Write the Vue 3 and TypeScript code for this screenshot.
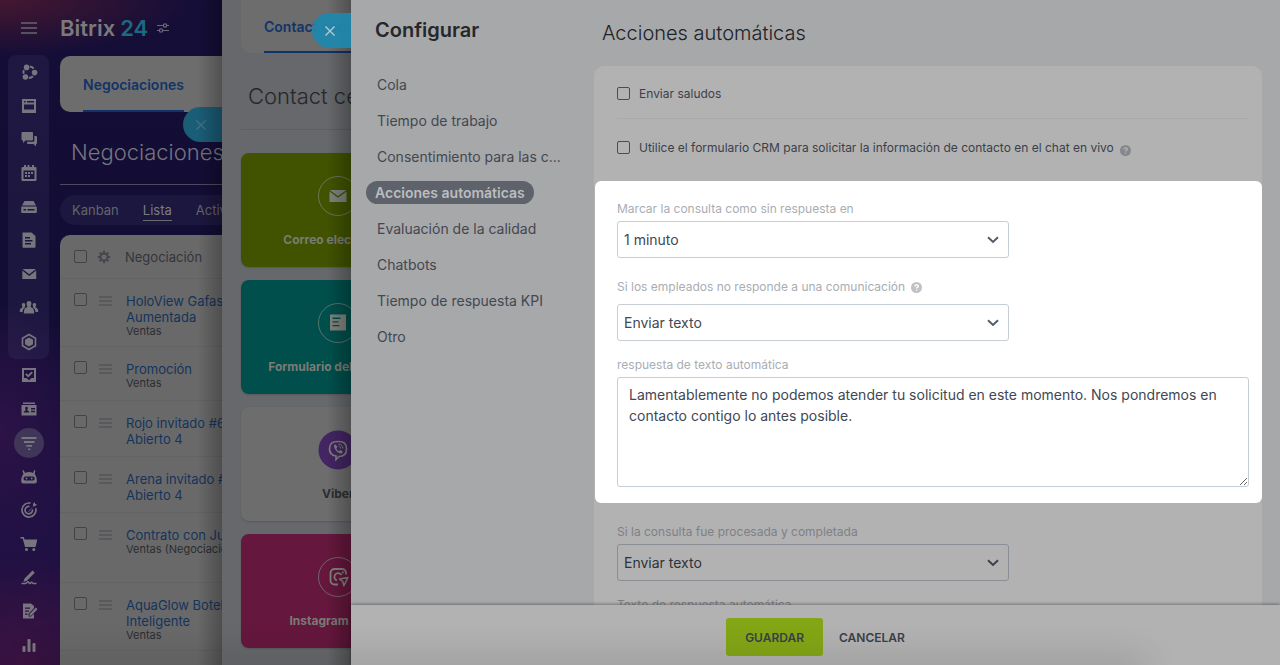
<script setup lang="ts">
import { ref } from 'vue'

interface RailIcon {
  name: string
  art: string
  active?: boolean
}

const railTop: RailIcon[] = [
  { name: 'Colaboración', art: '<path d="M11 4.600a6 6 0 0 1 3.600 2M4.800 8.200a6 6 0 0 0-.1 3.600M9.800 16a6 6 0 0 0 4.200-1.800" fill="none" stroke="currentColor" stroke-width="2"/><circle cx="7.600" cy="5.400" r="2.800"/><circle cx="15.600" cy="10.600" r="2.800"/><circle cx="6.400" cy="15" r="2.800"/>' },
  { name: 'Noticias', art: '<path fill-rule="evenodd" d="M3 3h14v14H3zM5 5v1.600h1.500V5zm3 0v1.600h7V5zM5 8.500v5h10v-5z"/>' },
  { name: 'Chat', art: '<path d="M3.500 3h9.500a1 1 0 0 1 1 1v6.500a1 1 0 0 1-1 1H6.500L4 14v-2.500h-.5a1 1 0 0 1-1-1V4a1 1 0 0 1 1-1z"/><path d="M15.300 7H17a1 1 0 0 1 1 1v6a1 1 0 0 1-1 1v2.500L14.500 15H9a1 1 0 0 1-1-1v-1.200h6.300a1 1 0 0 0 1-1z"/>' },
  { name: 'Calendario', art: '<path fill-rule="evenodd" d="M3.500 4H5V2h2v2h1.500V2h2v2H13V2h2v2h1.500a1 1 0 0 1 1 1v12a1 1 0 0 1-1 1h-13a1 1 0 0 1-1-1V5a1 1 0 0 1 1-1zM4.500 7.500V16h11V7.500z"/><path d="M6 9h2v2H6zm3 0h2v2H9zm3 0h2v2h-2zm-6 3h2v2H6zm3 0h2v2H9z"/>' },
  { name: 'Drive', art: '<path d="M5.500 4h9l2.500 4.500H3z"/><path fill-rule="evenodd" d="M3 9.500h14a.8.8 0 0 1 .8.8v4.900a.8.8 0 0 1-.8.8H3a.8.8 0 0 1-.8-.8v-4.900a.8.8 0 0 1 .8-.8zm1.500 2.400v1.600H7v-1.600zm4 0v1.600h7v-1.600z"/>' },
  { name: 'Documentos', art: '<path fill-rule="evenodd" d="M3.500 2.500h9L16.500 6v11a.8.8 0 0 1-.8.800H4.300a.8.8 0 0 1-.8-.8zM6 7v1.400h5V7zm0 3v1.400h7.500V10zm0 3v1.400h6V13z"/>' },
  { name: 'Correo', art: '<path d="M3.500 5h13.500l-6.800 5.200z"/><path d="M3.300 6.600l6.900 5.400 7-5.400V15H3.300z"/>' },
  { name: 'Grupos', art: '<path d="M10 3c1.700 0 2.600 1.200 2.400 2.900-.1 1.300-.8 1.900-.8 2.700 0 1 2.700 1.200 3.200 3.400l.4 3.500H4.800l.4-3.500c.5-2.200 3.200-2.400 3.200-3.400 0-.8-.7-1.400-.8-2.700C7.400 4.200 8.300 3 10 3z"/><path d="M4.500 5c1.300 0 1.900.9 1.800 2.200-.1 1-.5 1.300-.5 1.900 0 .5.200.7-.8 1.400-1 .8-1.200 1.500-1.400 3.500H.8c0-3 .3-3.400 2.300-4.300.4-.2.200-1.800-.2-2.700C2.600 5.900 3.200 5 4.500 5zM15.500 5c-1.300 0-1.900.9-1.800 2.200.1 1 .5 1.300.5 1.900 0 .5-.2.700.8 1.400 1 .8 1.200 1.500 1.400 3.500h2.800c0-3-.3-3.400-2.300-4.300-.4-.2-.2-1.800.2-2.700.3-1.100-.3-2-1.600-2z"/>' },
  { name: 'Aplicaciones', art: '<path d="M10 2.500l6.500 3.800v7.400L10 17.500l-6.500-3.800V6.300z" fill="none" stroke="currentColor" stroke-width="1.600"/><path d="M10 5.500l4 2.300v4.400l-4 2.300-4-2.300V7.800z"/>' },
]

const railBottom: RailIcon[] = [
  { name: 'Tareas', art: '<path fill-rule="evenodd" d="M3 3h14v14H3zm2 2v8h2.500L10 15.200 12.500 13H15V5z"/><path d="M6.800 8.800l2.400 2.400 4-4" fill="none" stroke="currentColor" stroke-width="1.800"/>' },
  { name: 'CRM', art: '<path d="M4 3.500h12V5H4z"/><path fill-rule="evenodd" d="M2.500 6h15v10.500h-15zM7.500 7.700c-1.800 0-1.600 2-.7 3.300-.2.700-2 .8-2.200 2.600h5.800c-.2-1.800-2-1.900-2.200-2.600.9-1.300 1.100-3.300-.7-3.300zM12 9v1.400h4V9zm0 2.800v1.400h4v-1.400z"/>' },
  { name: 'Embudo', active: true, art: '<path d="M2.500 4h15v2h-15zm2.500 4h10.500v2H5zm2.300 4h5.800v1.800H7.300zm1.800 3.500h2.200V17H9.100z"/>' },
  { name: 'CoPilot', art: '<path fill-rule="evenodd" d="M4.500 3l1.700 2.900C8.400 4.700 11.600 4.700 14 5.900L15.300 3l1 .5-.6 3.800c1.500 1.500 2.200 4 2.200 6.900 0 1.300-1 2.300-2.300 2.300H4.500c-1.300 0-2.300-1-2.300-2.300 0-2.900.7-5.400 2.200-6.900L3.500 3.500zM6.500 9.500a2 2 0 0 0 0 4h7.200a2 2 0 0 0 0-4z"/><circle cx="7.500" cy="11.500" r="1"/><circle cx="12.700" cy="11.500" r="1"/>' },
  { name: 'Marketing', art: '<path d="M16.700 8.200A7 7 0 1 1 11.500 3.200M13.400 9.400a3.700 3.700 0 1 1-2.800-2.900" fill="none" stroke="currentColor" stroke-width="1.700"/><path d="M9 11.400l5-5V3.800L16 2v2.200h2.200l-2 2h-1.800l-4.600 5.600z"/>' },
  { name: 'Tienda', art: '<path d="M1.500 3h3.300l.8 2.500h12.700L16.600 13H6L3.700 4.600H1.500z"/><circle cx="7.500" cy="15.600" r="1.500"/><circle cx="14.800" cy="15.600" r="1.500"/>' },
  { name: 'Firma', art: '<path d="M13.500 2.500l2.300 2.300-7.900 7.900-3.500 1.200 1.200-3.500z"/><path d="M2.500 15.500h4c1 0 1.500-1.800 2.500-1.800s.8 1.800 1.700 1.800 1-1.200 1.900-1.200.9 1.200 1.700 1.200h3.200" fill="none" stroke="currentColor" stroke-width="1.500"/>' },
  { name: 'Formularios', art: '<path fill-rule="evenodd" d="M4 2.500h8L15 5v2L9.500 13v2.500H12L15 13v4.500H4zM6 6.500v1.300h5V6.500zm0 3v1.300h4V9.500zm0 3v1.300h2.500v-1.300z"/><path d="M16.800 6.500l1.700 1.700-6 6.300-2.200.5.5-2.200z"/>' },
  { name: 'Analítica', art: '<rect x="3.500" y="11" width="3" height="6" rx="1"/><rect x="8.500" y="4" width="3" height="13" rx="1"/><rect x="13.500" y="8" width="3" height="9" rx="1"/>' },
]

const deals = [
  { id: 'd1', title: ['HoloView Gafas', 'Aumentada'], stage: 'Ventas', size: 'tall' },
  { id: 'd2', title: ['Promoción'], stage: 'Ventas', size: 'short' },
  { id: 'd3', title: ['Rojo invitado #6', 'Abierto 4'], stage: '', size: 'medium' },
  { id: 'd4', title: ['Arena invitado #7', 'Abierto 4'], stage: '', size: 'medium' },
  { id: 'd5', title: ['Contrato con Julia'], stage: 'Ventas (Negociación)', size: 'large' },
  { id: 'd6', title: ['AquaGlow Botella', 'Inteligente'], stage: 'Ventas', size: 'tall' },
  { id: 'd7', title: [], stage: '', size: 'short' },
]

const channels = [
  { kind: 'mail', label: 'Correo electrónico', art: '<path d="M11.500 14h17l-8.500 6z"/><path d="M11.500 15.500l8.500 6.300 8.500-6.300V26h-17z"/>' },
  { kind: 'form', label: 'Formulario del sitio web', art: '<path fill-rule="evenodd" d="M12 11.500h16v16H12zm2.500 3v1.400h8v-1.400zm0 3.700v1.400h6v-1.400zm0 3.700v1.400h7v-1.400z"/>' },
  { kind: 'viber', label: 'Viber', art: '<path d="M20 11.500c6 0 8.500 2 8.500 7.500s-2.500 7.500-7.500 7.500L18 29.500V26c-4-.5-6.500-2-6.500-7 0-5.500 2.500-7.500 8.500-7.500z" fill="none" stroke="currentColor" stroke-width="1.700"/><path d="M16 15l1.600-.6 1.800 2.400-1 1.600c.5 1.300 1.500 2.200 2.700 2.700l1.500-1 2.200 1.700-.8 1.700c-3.600.6-8.400-4.200-8-8.500z"/><path d="M20.500 14.200c2.700 0 4.300 1.700 4.300 4.300M20.700 16.400c1.300.1 1.900.8 1.900 2" fill="none" stroke="currentColor" stroke-width="1"/>' },
  { kind: 'insta', label: 'Instagram Direct', art: '<path d="M28 17.500V16a4 4 0 0 0-4-4h-7.500a4 4 0 0 0-4 4v7.500a4 4 0 0 0 4 4H20M23.500 18a3.800 3.800 0 1 0-4.500 5.500" fill="none" stroke="currentColor" stroke-width="1.800"/><circle cx="24.800" cy="15.500" r="1"/><path d="M21.500 22l8.500-1.500-4.200 8.300-1-4.300z" fill="none" stroke="currentColor" stroke-width="1.500" stroke-linejoin="round"/>' },
]

const menu = [
  'Cola',
  'Tiempo de trabajo',
  'Consentimiento para las c...',
  'Acciones automáticas',
  'Evaluación de la calidad',
  'Chatbots',
  'Tiempo de respuesta KPI',
  'Otro',
]
const currentMenu = ref('Acciones automáticas')

const greet = ref(false)
const useForm = ref(false)
const waitTime = ref('1 minuto')
const noAnswer = ref('Enviar texto')
const closedAction = ref('Enviar texto')
const autoReply = ref(
  'Lamentablemente no podemos atender tu solicitud en este momento. Nos pondremos en contacto contigo lo antes posible.',
)
</script>

<template>
  <div class="screen">
    <div class="deals">
      <nav class="rail" aria-label="Herramientas">
        <button class="burger" type="button" aria-label="Menú"><i></i><i></i><i></i></button>
        <div class="rail-group rail-box">
          <button v-for="item in railTop" :key="item.name" type="button" class="rail-btn" :aria-label="item.name">
            <svg viewBox="0 0 20 20" v-html="item.art"></svg>
          </button>
        </div>
        <div class="rail-group">
          <button
            v-for="item in railBottom"
            :key="item.name"
            type="button"
            class="rail-btn"
            :class="{ active: item.active }"
            :aria-label="item.name"
          >
            <svg viewBox="0 0 20 20" v-html="item.art"></svg>
          </button>
        </div>
      </nav>

      <div class="deals-page">
        <header class="brand">
          <span>Bitrix</span><b>24</b>
          <svg class="tune" viewBox="0 0 12 12">
            <path d="M0 3.500h6M10 3.500h2M0 8.500h2M6 8.500h6" />
            <circle cx="8" cy="3.500" r="1.700" /><circle cx="4" cy="8.500" r="1.700" />
          </svg>
        </header>
        <div class="tab-card deals-tab"><a href="#" class="tab">Negociaciones</a></div>
        <h1 class="deals-title">Negociaciones</h1>
        <div class="views">
          <a href="#">Kanban</a><a href="#" class="on">Lista</a><a href="#">Actividades</a>
        </div>
        <table class="grid">
          <thead>
            <tr>
              <th class="c-check"><input type="checkbox" class="check" aria-label="Seleccionar todo" /></th>
              <th class="c-icon">
                <svg class="gear" viewBox="0 0 14 14">
                  <circle cx="7" cy="7" r="3.600" fill="none" stroke="currentColor" stroke-width="2.200" />
                  <path d="M7 .8v2M7 11.200v2M.8 7h2M11.200 7h2M2.600 2.600L4 4M10 10l1.400 1.400M2.600 11.400L4 10M10 4l1.400-1.400" stroke="currentColor" stroke-width="2" />
                </svg>
              </th>
              <th class="c-name">Negociación</th>
            </tr>
          </thead>
          <tbody>
            <tr v-for="deal in deals" :key="deal.id" :class="deal.size">
              <td class="c-check">
                <input v-if="deal.title.length" type="checkbox" class="check" :aria-label="deal.title[0]" />
              </td>
              <td class="c-icon"><span v-if="deal.title.length" class="lines"><i></i><i></i><i></i></span></td>
              <td class="c-name">
                <a href="#"><span v-for="line in deal.title" :key="line">{{ line }}</span></a>
                <small v-if="deal.stage">{{ deal.stage }}</small>
              </td>
            </tr>
          </tbody>
        </table>
      </div>
      <button type="button" class="closer closer-far" aria-label="Cerrar Contact center">
        <svg viewBox="0 0 10 10"><path d="M.5.5l9 9M9.500.5l-9 9" /></svg>
      </button>
    </div>

    <div class="contact">
      <div class="tab-card contact-tab"><a href="#" class="tab">Contact center</a></div>
      <h2 class="contact-title">Contact center</h2>
      <div class="tiles">
        <a v-for="ch in channels" :key="ch.kind" href="#" class="tile" :class="ch.kind">
          <svg class="tile-icon" viewBox="0 0 40 40">
            <circle class="ring" cx="20" cy="20" r="19.500" />
            <g v-html="ch.art"></g>
          </svg>
          <span>{{ ch.label }}</span>
        </a>
      </div>
      <button type="button" class="closer closer-near" aria-label="Cerrar configuración">
        <svg viewBox="0 0 10 10"><path d="M.5.5l9 9M9.500.5l-9 9" /></svg>
      </button>
    </div>

    <section class="config">
      <div class="config-body">
        <aside class="side">
          <h2>Configurar</h2>
          <ul>
            <li v-for="item in menu" :key="item">
              <a href="#" :class="{ current: item === currentMenu }" @click.prevent="currentMenu = item">{{ item }}</a>
            </li>
          </ul>
        </aside>

        <main class="main">
          <h1>Acciones automáticas</h1>
          <form class="card" @submit.prevent>
            <div class="option">
              <label><input v-model="greet" type="checkbox" class="check" />Enviar saludos</label>
            </div>
            <div class="option tall">
              <label>
                <input v-model="useForm" type="checkbox" class="check" />Utilice el formulario CRM para solicitar la
                información de contacto en el chat en vivo
              </label>
              <svg class="help" viewBox="0 0 12 12" role="img" aria-label="Ayuda">
                <circle cx="6" cy="6" r="6" /><path d="M4.200 4.800C4.200 2.500 7.900 2.600 7.900 4.600 7.900 5.900 6.100 5.900 6.100 7.200M6.100 8.300v1.300" />
              </svg>
            </div>

            <div class="spot">
              <div class="field">
                <label for="wait">Marcar la consulta como sin respuesta en</label>
                <div class="pick">
                  <select id="wait" v-model="waitTime"><option>1 minuto</option><option>3 minutos</option></select>
                  <svg viewBox="0 0 12 8"><path d="M1 1.300l5 4.700 5-4.700" /></svg>
                </div>
              </div>
              <div class="field">
                <div class="caption">
                  <label for="noanswer">Si los empleados no responde a una comunicación</label>
                  <svg class="help" viewBox="0 0 12 12" role="img" aria-label="Ayuda">
                    <circle cx="6" cy="6" r="6" /><path d="M4.200 4.800C4.200 2.500 7.900 2.600 7.900 4.600 7.900 5.900 6.100 5.900 6.100 7.200M6.100 8.300v1.300" />
                  </svg>
                </div>
                <div class="pick">
                  <select id="noanswer" v-model="noAnswer"><option>Enviar texto</option><option>No hacer nada</option></select>
                  <svg viewBox="0 0 12 8"><path d="M1 1.300l5 4.700 5-4.700" /></svg>
                </div>
              </div>
              <div class="field">
                <label for="reply">respuesta de texto automática</label>
                <textarea id="reply" v-model="autoReply" spellcheck="false"></textarea>
              </div>
            </div>

            <div class="rest">
              <div class="field">
                <label for="closed">Si la consulta fue procesada y completada</label>
                <div class="pick">
                  <select id="closed" v-model="closedAction"><option>Enviar texto</option><option>No hacer nada</option></select>
                  <svg viewBox="0 0 12 8"><path d="M1 1.300l5 4.700 5-4.700" /></svg>
                </div>
              </div>
              <div class="field">
                <label for="closedtext">Texto de respuesta automática</label>
                <textarea id="closedtext"></textarea>
              </div>
            </div>
          </form>
        </main>
      </div>
      <footer class="actions">
        <button type="button" class="save">GUARDAR</button>
        <button type="button" class="cancel">CANCELAR</button>
      </footer>
    </section>
    <div class="floor-shade"></div>
  </div>
</template>

<style>
body {
  margin: 0;
  background: #a7a8aa;
}
</style>

<style scoped>
.screen,
.screen * {
  box-sizing: border-box;
}
.screen {
  position: relative;
  display: flex;
  height: 100vh;
  overflow: hidden;
  font-family: Inter, 'Liberation Sans', sans-serif;
  font-size: 14px;
  color: #3a3f4a;
}
h1,
h2,
ul {
  margin: 0;
  padding: 0;
}
button {
  font: inherit;
  border: 0;
  padding: 0;
  background: none;
  color: inherit;
}
a {
  color: inherit;
  text-decoration: none;
}
svg {
  display: block;
  flex: none;
  fill: currentColor;
}
.check {
  appearance: none;
  flex: none;
  display: block;
  width: 13px;
  height: 13px;
  margin: 0;
  border: 1px solid #4a4c50;
  border-radius: 2px;
}

/* Deals page */
.deals {
  position: relative;
  flex: none;
  display: flex;
  width: 222px;
  overflow: hidden;
  background:
    radial-gradient(ellipse 190px 56px at 0 0, #451730, transparent),
    radial-gradient(ellipse 90px 130px at 0 430px, #2d1347, transparent),
    radial-gradient(ellipse 110px 110px at 20px 665px, #3b1340, transparent),
    linear-gradient(#150e38, #120d34 45%, #1e1043 75%, #251044);
}
.deals::after,
.contact::after {
  content: '';
  position: absolute;
  inset: 0 0 0 auto;
  width: 24px;
  background: linear-gradient(to right, transparent, rgba(0, 0, 0, 0.26));
  pointer-events: none;
}
.rail {
  flex: none;
  display: flex;
  flex-direction: column;
  width: 60px;
  padding: 0 11px 3px 8px;
}
.burger {
  display: flex;
  flex-direction: column;
  align-items: center;
  justify-content: center;
  gap: 3px;
  height: 55px;
}
.burger i {
  width: 16px;
  height: 2px;
  background: #56515f;
}
.rail-group {
  flex: 1;
  display: flex;
  flex-direction: column;
}
.rail-box {
  border-radius: 8px;
  background: rgba(110, 100, 150, 0.12);
}
.rail-btn {
  flex: 1;
  display: grid;
  place-items: center;
  color: #77757e;
}
.rail-btn svg {
  width: 20px;
  height: 20px;
}
.rail-btn.active {
  align-self: center;
  flex: none;
  width: 30px;
  height: 30px;
  margin: 2px 0;
  border-radius: 50%;
  background: #403658;
}
.deals-page {
  flex: 1;
  min-width: 0;
}
.brand {
  display: flex;
  align-items: center;
  height: 56px;
  font-size: 22px;
  font-weight: 600;
  color: #7a7a7c;
}
.brand b {
  margin: 0 9px 0 5px;
  font-weight: 600;
  color: #1a6a80;
}
.tune {
  width: 12px;
  height: 12px;
  fill: none;
  stroke: #6b6974;
  stroke-width: 1.2;
}
.tab-card {
  display: flex;
  align-items: stretch;
  padding-left: 23px;
  background: #6d6d6d;
}
.deals-tab {
  height: 56px;
  border-radius: 10px 0 0 10px;
}
.tab {
  display: flex;
  align-items: center;
  padding-top: 2px;
  border-bottom: 2px solid #0f326b;
  font-weight: 600;
  color: #123468;
  white-space: nowrap;
}
.deals-title {
  height: 73px;
  padding-left: 11px;
  border-bottom: 1px solid #4d4a60;
  font-size: 22px;
  font-weight: 300;
  line-height: 80px;
  color: #77757e;
}
.views {
  display: flex;
  align-items: center;
  gap: 24px;
  height: 30px;
  margin: 10px 0;
  padding-left: 12px;
  border-radius: 15px 0 0 15px;
  background: #1c173f;
  font-size: 13px;
  color: #65646c;
}
.views a {
  padding: 3px 0 2px;
  line-height: 15px;
  border-bottom: 1px solid transparent;
}
.views .on {
  color: #7c7b82;
  border-color: #6b6a72;
}
.grid {
  width: 240px;
  border-collapse: separate;
  border-spacing: 0;
  table-layout: fixed;
  border-radius: 10px 0 0 0;
  background: #696969;
  color: #33353a;
}
.grid th,
.grid td {
  padding: 0;
  border-bottom: 1px solid #626366;
  text-align: left;
  font-weight: 400;
}
.grid td {
  vertical-align: top;
}
.grid th {
  height: 44px;
  font-size: 13px;
}
.grid .c-check {
  width: 37px;
  padding-left: 14px;
}
.grid .c-icon {
  width: 28px;
}
.gear {
  width: 14px;
  height: 14px;
  color: #45474c;
}
.tall td {
  height: 68px;
}
.short td {
  height: 54px;
}
.medium td {
  height: 56px;
}
.large td {
  height: 70px;
}
td .check {
  margin-top: 14px;
}
.grid .check {
  border-color: #414347;
}
.lines {
  display: flex;
  flex-direction: column;
  gap: 2px;
  width: 13px;
  margin: 17px 0 0 2px;
}
.lines i {
  height: 2px;
  background: #57595d;
}
tbody .c-name a,
tbody .c-name small {
  display: block;
  white-space: nowrap;
}
tbody .c-name a {
  padding: 14px 0 0 1px;
  font-size: 13px;
  line-height: 16px;
  color: #15345c;
}
tbody .c-name a span {
  display: block;
}
tbody .c-name small {
  padding-left: 1px;
  font-size: 11px;
  line-height: 13px;
  color: #2b2d31;
}

/* Tab that closes a slider */
.closer {
  position: absolute;
  right: 0;
  height: 35px;
  display: flex;
  align-items: center;
  width: 39px;
  border-radius: 18px 0 0 18px;
}
.closer svg {
  width: 10px;
  height: 10px;
  margin-left: 13px;
  fill: none;
  stroke: currentColor;
  stroke-width: 1.4;
}
.closer-far {
  top: 107px;
  background: #1a5d76;
  color: #427284;
}
.closer-near {
  top: 13px;
  z-index: 1;
  background: rgba(32, 134, 170, 0.96);
  color: #b4cbd3;
}

/* Contact center */
.contact {
  position: relative;
  flex: none;
  width: 129px;
  padding-left: 19px;
  overflow: hidden;
  background: #66686b;
}
.contact-tab {
  height: 53px;
  border-radius: 0 0 0 10px;
}
.contact-title {
  height: 77px;
  margin-bottom: 23px;
  padding-left: 7px;
  border-bottom: 1px solid #5c5e61;
  font-size: 22px;
  font-weight: 300;
  line-height: 86px;
  white-space: nowrap;
  color: #25272b;
}
.tiles {
  display: grid;
  gap: 13px;
  width: 194px;
}
.tile {
  display: flex;
  flex-direction: column;
  align-items: center;
  height: 114px;
  padding-top: 23px;
  border-radius: 8px;
  font-size: 12px;
  font-weight: 700;
  line-height: 16px;
  white-space: nowrap;
  color: #7a7c76;
  box-shadow: 0 1px 2px rgba(0, 0, 0, 0.15);
}
.tile-icon {
  width: 40px;
  height: 40px;
  margin-bottom: 16px;
  color: #80827c;
}
.ring {
  fill: none;
  stroke: currentColor;
  opacity: 0.7;
}
.mail {
  background: #415300;
}
.form {
  background: #004f4c;
}
.viber {
  background: #6d6d6d;
  color: #2a2d33;
}
.viber .ring {
  fill: #432563;
  stroke: none;
  opacity: 1;
}
.insta {
  background: #65173d;
}

/* Settings slider */
.config {
  flex: 1;
  min-width: 0;
  display: flex;
  flex-direction: column;
  background: #a7a8aa;
}
.config-body {
  flex: 1;
  min-height: 0;
  display: flex;
  overflow: hidden;
}
.side {
  flex: none;
  width: 243px;
  padding: 18px 0 0 15px;
}
.side h2 {
  margin-bottom: 24px;
  padding-left: 9px;
  font-size: 20px;
  font-weight: 600;
  line-height: 24px;
  color: #25272b;
}
.side li {
  display: flex;
  align-items: center;
  height: 36px;
}
.side li a {
  padding: 0 11px;
  border-radius: 12px;
  line-height: 23px;
  white-space: nowrap;
  color: #43474f;
}
.side li .current {
  padding: 0 9px;
  background: #5e626b;
  font-weight: 600;
  color: #bcbdbf;
}
.main {
  flex: 1;
  min-width: 0;
  padding: 0 18px 0 0;
}
.main h1 {
  height: 66px;
  padding-left: 8px;
  font-size: 20px;
  font-weight: 300;
  line-height: 66px;
  color: #202226;
}
.card {
  border-radius: 10px 10px 0 0;
  background: #b2b2b2;
}
.option {
  display: flex;
  align-items: center;
  gap: 6px;
  height: 53px;
  margin: 0 13px 0 23px;
  padding-top: 3px;
  border-bottom: 1px solid #a9aaac;
  font-size: 12px;
}
.option.tall {
  height: 62px;
  padding: 0 0 6px;
  border-bottom: 0;
}
.option label {
  display: flex;
  align-items: center;
  gap: 9px;
}
.help {
  width: 11px;
  height: 11px;
  fill: #84878c;
}
.help path {
  fill: none;
  stroke: #b2b2b2;
  stroke-width: 1.5;
}
.option .help {
  align-self: flex-end;
  margin-bottom: 19px;
}
.spot {
  margin-left: 1px;
  padding: 19px 13px 16px 22px;
  border-radius: 6px;
  background: #fff;
}
.spot .help {
  fill: #bfc1c5;
}
.spot .help path {
  stroke: #fff;
}
.rest {
  padding: 20px 13px 16px 23px;
}
.field + .field {
  margin-top: 15px;
}
.field label {
  display: block;
  padding-bottom: 3px;
  font-size: 12px;
  line-height: 18px;
  color: #a9adb4;
}
.rest .field label {
  color: #7d8187;
}
.caption {
  display: flex;
  align-items: center;
  gap: 6px;
  padding: 5px 0 8px;
}
.field .caption label {
  padding: 0;
}
.pick {
  position: relative;
  width: 392px;
  max-width: 100%;
}
.pick svg {
  position: absolute;
  top: 15px;
  right: 10px;
  width: 12px;
  height: 8px;
  fill: none;
  stroke: #525c69;
  stroke-width: 2;
  pointer-events: none;
}
select,
textarea {
  display: block;
  width: 100%;
  border: 1px solid #c6cdd3;
  border-radius: 3px;
  background: transparent;
  font: inherit;
  color: #414753;
}
select {
  appearance: none;
  height: 37px;
  padding: 0 6px;
}
textarea {
  height: 110px;
  padding: 6px 11px;
  line-height: 21px;
  resize: both;
}
.rest select,
.rest textarea {
  border-color: #8a8f96;
  color: #2d323a;
}
.rest .pick svg {
  stroke: #3a414b;
}
.actions {
  position: relative;
  display: flex;
  align-items: center;
  justify-content: center;
  gap: 16px;
  padding: 13px 0 9px;
  background: #b2b2b2;
  box-shadow: 0 -1px 3px rgba(0, 0, 0, 0.35);
}
.actions button {
  height: 38px;
  font-size: 12px;
  font-weight: 600;
  color: #3a4049;
}
.actions .save {
  padding: 0 19px;
  border-radius: 3px;
  background: #83a616;
}
.floor-shade {
  position: absolute;
  right: 140px;
  bottom: -4px;
  left: 40px;
  height: 1px;
  box-shadow: 0 0 36px 5px rgba(0, 0, 0, 0.3);
  pointer-events: none;
}
</style>
